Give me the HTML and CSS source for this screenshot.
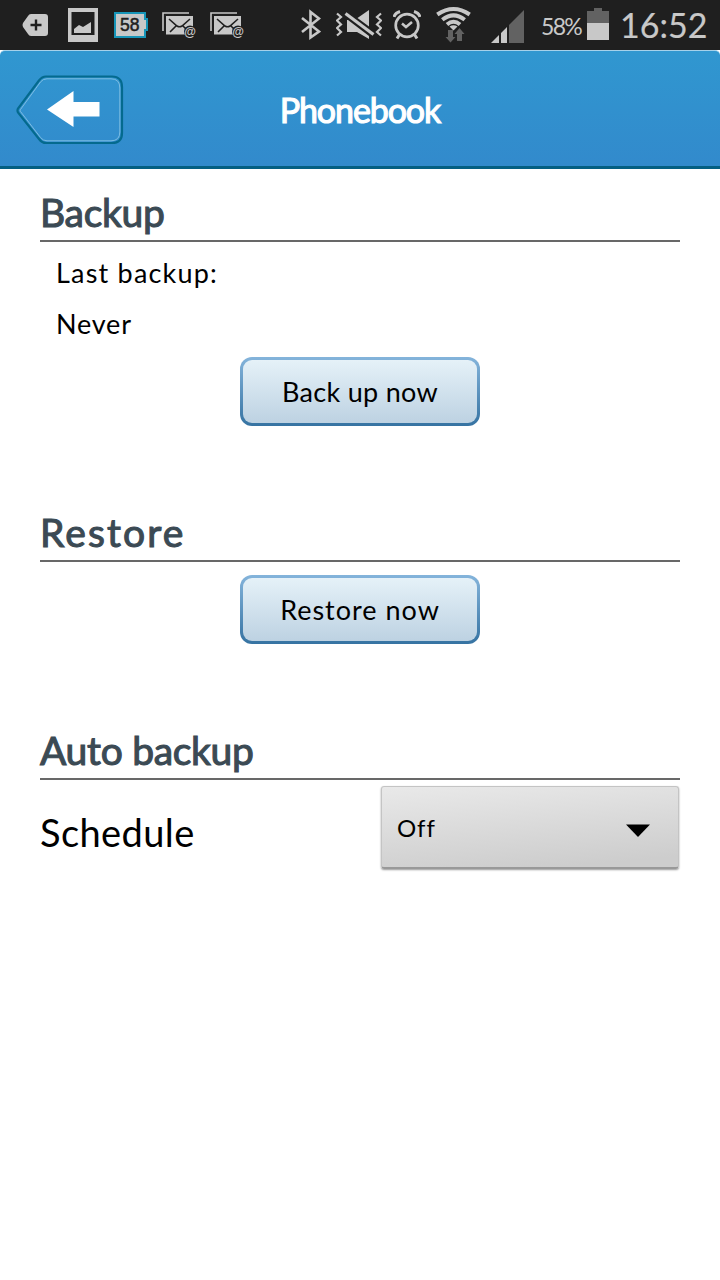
FILE: index.html
```html
<!DOCTYPE html>
<html lang="en">
<head>
<meta charset="UTF-8">
<meta name="viewport" content="width=device-width, initial-scale=1.0">
<title>Phonebook</title>
<link rel="stylesheet" href="styles.css">
</head>
<body>
    <div class="status-bar">
        <div class="notifications">
            <svg width="26" height="50" viewBox="22 0 26 50">
                <path d="M31 14h14q3 0 3 3v16q0 3-3 3H31q-2 0-3-2l-5-7q-1-2 0-4l5-7q1-2 3-2z" fill="#c8c8c8"/>
                <path d="M30.500 25h11M36 19.500v11" stroke="#1f1f1f" stroke-width="2.400"/>
            </svg>
            <svg width="30" height="50" viewBox="68 0 30 50">
                <path d="M68 8h30v34H68zM71.500 12v23h23V12z" fill="#c8c8c8" fill-rule="evenodd"/>
                <path d="M74 33v-4l5-4 4 2 8-5v11z" fill="#c8c8c8"/>
            </svg>
            <svg width="34" height="50" viewBox="114 0 34 50">
                <path d="M115 13h30v6h2v11h-2v7h-30z" fill="#c8c8c8" stroke="#1795b8" stroke-width="2"/>
                <text class="badge-level" x="129.800" y="31.200" text-anchor="middle">58</text>
            </svg>
            <svg width="35" height="50" viewBox="0 0 35 50">
                <path d="M1 31V13h26" fill="none" stroke="#c8c8c8" stroke-width="1.600"/>
                <path d="M4 16h27v18.500H4z" fill="#c8c8c8"/>
                <path d="M7 19l8 7q2.500 1.500 5 0l8-7M8 32l6-6M27 32l-6-6" fill="none" stroke="#1f1f1f" stroke-width="1.600"/>
                <circle cx="28" cy="31.500" r="6" fill="#1f1f1f"/>
                <text class="at" x="28" y="35.500" text-anchor="middle">@</text>
            </svg>
            <svg width="35" height="50" viewBox="0 0 35 50">
                <path d="M1 31V13h26" fill="none" stroke="#c8c8c8" stroke-width="1.600"/>
                <path d="M4 16h27v18.500H4z" fill="#c8c8c8"/>
                <path d="M7 19l8 7q2.500 1.500 5 0l8-7M8 32l6-6M27 32l-6-6" fill="none" stroke="#1f1f1f" stroke-width="1.600"/>
                <circle cx="28" cy="31.500" r="6" fill="#1f1f1f"/>
                <text class="at" x="28" y="35.500" text-anchor="middle">@</text>
            </svg>
        </div>
        <div class="indicators">
            <svg width="20" height="50" viewBox="301 0 20 50">
                <path d="M302 18l17 13.500-8.500 6V12l8.500 6.500L302 32" fill="none" stroke="#c8c8c8" stroke-width="2.600"/>
            </svg>
            <svg width="46" height="50" viewBox="336 0 46 50">
                <path d="M347 20v12h10l12 7v-3L348 20zM357.500 18L369 10v16.500z" fill="#c8c8c8"/>
                <path d="M347 17L371.500 36" stroke="#1f1f1f" stroke-width="2"/>
                <path d="M345.500 13.500L373.500 34.500" stroke="#c8c8c8" stroke-width="3.200"/>
                <path d="M337 13.500l4 3.500-4 3.500 4 4-4 3.500 4 4-4 3.500M381 13.500l-4 3.500 4 3.500-4 4 4 3.500-4 4 4 3.500" fill="none" stroke="#c8c8c8" stroke-width="2.200"/>
            </svg>
            <svg width="28" height="50" viewBox="393 0 28 50">
                <g fill="none" stroke="#c8c8c8">
                    <circle cx="407" cy="25.500" r="11.300" stroke-width="2.700"/>
                    <path d="M402 23.500l4 3.500 6-5" stroke-width="2.500"/>
                    <path d="M394 17q1-4 6-5.500M420 17q-1-4-6-5.500" stroke-width="3"/>
                    <path d="M399.500 34.500l-2.500 4M414.500 34.500l2.500 4" stroke-width="3"/>
                </g>
            </svg>
            <svg width="36" height="50" viewBox="437 0 36 50">
                <g fill="none" stroke="#c8c8c8" stroke-width="4">
                    <path d="M438.300 14.500Q454.500 3.500 470.700 14.500"/>
                    <path d="M443.300 19.800Q454.500 11 465.700 19.800"/>
                    <path d="M448 24.500Q454.500 19 461 24.500"/>
                </g>
                <path d="M450.500 26.500q4-2.500 8 0l-4 4z" fill="#c8c8c8"/>
                <path d="M449 30h5v7h2.500l-5 5.500-5-5.500h2.500zM458 41h5v-7h2.500l-5-6-5 6h2.500z" fill="#626262"/>
            </svg>
            <svg width="33" height="50" viewBox="492 0 33 50">
                <path d="M492 43l8-8v8zM502 43V33l6-6v16z" fill="#c8c8c8"/>
                <path d="M510 43V25l15-15v33z" fill="#626262"/>
            </svg>
            <span class="level">58%</span>
            <svg width="22" height="50" viewBox="587 0 22 50">
                <path d="M587 11h7V8h8v3h7v12h-22z" fill="#626262"/>
                <path d="M587 23h22v17h-22z" fill="#c8c8c8"/>
            </svg>
            <span class="clock">16:52</span>
        </div>
    </div>

    <div class="header">
        <a class="back">
            <svg width="108" height="70" viewBox="0 0 108 70">
                <path d="M30 1.500H96Q106 1.500 106 12V58Q106 68 96 68H30Q26 68 23 64L2 37.500Q1 35.500 2 33.500L23 5.500Q26 1.500 30 1.500Z" fill="none" stroke="#046a8e" stroke-width="2.200"/>
                <path d="M31 3.800H95Q103.800 3.800 103.800 13V57Q103.800 65.800 95 65.800H31Q27 65.800 24.500 62.500L4.500 36.500Q3.800 35.500 4.500 34.500L24.500 7Q27 3.800 31 3.800Z" fill="none" stroke="#7dbde2" stroke-width="1"/>
                <path d="M31 34.500L57.500 16V27H83.500V41.500H57.500V52Z" fill="#fff"/>
            </svg>
        </a>
        <h1>Phonebook</h1>
    </div>

    <div class="content">
        <section class="backup">
            <h2>Backup</h2>
            <p class="last">Last backup:</p>
            <p class="date">Never</p>
            <button class="button">Back up now</button>
        </section>

        <section class="restore">
            <h2>Restore</h2>
            <button class="button">Restore now</button>
        </section>

        <section class="auto">
            <h2>Auto backup</h2>
            <div class="row">
                <span class="label">Schedule</span>
                <div class="select">
                    <span class="value">Off</span>
                    <svg width="24" height="13" viewBox="0 0 24 13">
                        <path d="M0 0.500H24L12 13Z" fill="#000"/>
                    </svg>
                </div>
            </div>
        </section>
    </div>
</body>
</html>
```

FILE: styles.css
```css
* {
    box-sizing: border-box;
}

body {
    margin: 0;
    font-family: Lato, "Open Sans", sans-serif;
    color: #000;
    background: #fff;
}

h1, h2, p {
    margin: 0;
    font-weight: normal;
}

svg {
    display: block;
    flex: none;
}

.status-bar {
    display: flex;
    justify-content: space-between;
    height: 50px;
    padding: 0 13px 0 22px;
    background: #1f1f1f;
    color: #c8c8c8;
}

.notifications {
    display: flex;
    gap: 13px;
}

.notifications svg:first-child {
    margin-right: 7px;
}

.notifications svg:nth-child(2) {
    margin-right: 3px;
}

.notifications svg:nth-child(3) {
    margin-right: 1px;
}

.badge-level {
    font: 17.5px "Liberation Sans", sans-serif;
    fill: #1f1f1f;
    stroke: #1f1f1f;
    stroke-width: 0.5px;
}

.at {
    font: bold 12px "Liberation Sans", sans-serif;
    fill: #c8c8c8;
}

.indicators {
    display: flex;
    gap: 15px;
    line-height: 50px;
    white-space: nowrap;
}

.indicators svg:nth-child(2) {
    margin-right: -4px;
}

.indicators svg:nth-child(4) {
    margin-right: 4px;
}

.level {
    width: 40px;
    margin: 1px -9px 0 2px;
    font-size: 23px;
    letter-spacing: -1.7px;
}

.clock {
    width: 87px;
    margin-left: -4px;
    font-size: 34px;
    -webkit-text-stroke: 0.2px;
}

.header {
    display: grid;
    grid-template-columns: 1fr auto 1fr;
    align-items: center;
    height: 119px;
    padding: 2px 16px 0;
    border-top: 1px solid #a5d1ea;
    border-bottom: 3px solid #045f82;
    border-radius: 5px 5px 0 0;
    background: linear-gradient(#3097d0, #328acc);
}

h1 {
    font-size: 34px;
    line-height: 40px;
    letter-spacing: -1.1px;
    color: #fff;
    -webkit-text-stroke: 1.1px;
}

.content {
    padding: 19px 40px 0;
}

section {
    display: flex;
    flex-direction: column;
}

h2 {
    height: 54px;
    border-bottom: 2px solid #686868;
    font-size: 39px;
    line-height: 49px;
    letter-spacing: -0.3px;
    color: #3b4a54;
    -webkit-text-stroke: 1.1px;
}

p {
    height: 51px;
    padding-left: 16px;
    font-size: 27px;
    line-height: 62px;
}

.last {
    letter-spacing: 1.2px;
}

.date {
    letter-spacing: 0.8px;
}

.button {
    align-self: center;
    width: 240px;
    height: 69px;
    padding: 0;
    border: 3px solid transparent;
    border-radius: 12px;
    background:
        linear-gradient(#e5f1f8, #bdd2e2) padding-box,
        linear-gradient(#84b4db, #3673a2) border-box;
    font-family: inherit;
    font-size: 27px;
    letter-spacing: 0.3px;
    color: #000;
}

.backup .button {
    margin-top: 13px;
}

.restore {
    margin-top: 82px;
}

.restore h2 {
    letter-spacing: 2.1px;
}

.restore .button {
    margin-top: 13px;
    letter-spacing: 1px;
}

.auto {
    margin-top: 82px;
}

.row {
    display: flex;
    justify-content: space-between;
    padding-top: 6px;
}

.label {
    font-size: 38px;
    line-height: 92px;
    letter-spacing: 0.4px;
}

.select {
    display: flex;
    align-items: center;
    justify-content: space-between;
    width: 298px;
    height: 83px;
    margin-right: 1px;
    padding: 2px 28px 0 15px;
    border: 1px solid #c4c4c4;
    border-bottom: 2px solid #999;
    border-radius: 3px;
    background: linear-gradient(175deg, #e9e9e9, #cdcdcd 90%);
    box-shadow: 0 1px 2px rgba(0, 0, 0, 0.4);
    font-size: 24px;
}

.value {
    margin-top: -2px;
    letter-spacing: 1px;
}

.select svg {
    margin-top: 4px;
}
```
